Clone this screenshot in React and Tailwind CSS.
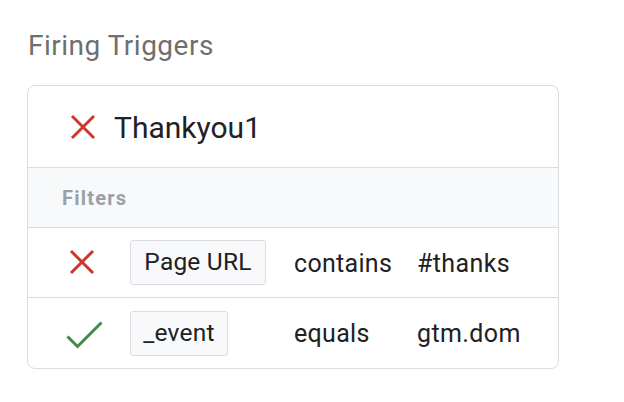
import React from 'react';

const XIcon = () => (
    <svg width="26" height="26" viewBox="0 0 26 26" fill="none">
        <path d="M2 2 L24 24 M24 2 L2 24" stroke="#c9392d" strokeWidth="3" />
    </svg>
);

const CheckIcon = () => (
    <svg width="37" height="28" viewBox="0 0 37 28" fill="none">
        <path d="M1.5 15.5 L11.5 25.5 L35.5 1.5" stroke="#3d8b47" strokeWidth="3" />
    </svg>
);

const Chip = ({ children, width }) => (
    <div className={`h-[45px] ${width} flex items-center justify-center bg-[#f8f9fa] border border-[#dadce0] rounded-[3px] text-[24.5px] tracking-[0.2px] text-[#202124]`}>
        {children}
    </div>
);

const FilterRow = ({ ok, variable, op, value, last }) => (
    <div className={`flex items-center h-[70px] ${last ? '' : 'border-b border-[#dadce0]'}`}>
        <div className="w-[102px] flex">
            {ok ? <div className="ml-[38px] mt-[4px]"><CheckIcon /></div> : <div className="ml-[41px] mt-[-1px]"><XIcon /></div>}
        </div>
        <div className="w-[164px] flex">
            <Chip width={variable === 'Page URL' ? 'w-[136px]' : 'w-[98px]'}>{variable}</Chip>
        </div>
        <div className="w-[123px] text-[25px] tracking-[0.3px] text-[#202124] mt-[2px]">{op}</div>
        <div className="text-[25px] tracking-[0.4px] text-[#202124] mt-[2px]">{value}</div>
    </div>
);

export default function App() {
    return (
        <div className="w-[624px] h-[402px] bg-white pl-[27px] pt-[28px]" style={{ fontFamily: 'Roboto, "Liberation Sans", sans-serif' }}>
            <h2 className="pl-[1px] text-[28px] leading-[36px] tracking-[0.5px] text-[#6f6f6f]">Firing Triggers</h2>
            <div className="mt-[21px] w-[532px] border border-[#dadce0] rounded-[8px] overflow-hidden">
                <div className="h-[82px] flex items-center border-b border-[#dadce0]">
                    <div className="ml-[42px] mr-[18px] mt-[1px]"><XIcon /></div>
                    <span className="text-[30px] text-[#202124] mt-[2px]">Thankyou1</span>
                </div>
                <div className="h-[60px] flex items-center bg-[#f8f9fa] border-b border-[#dadce0] pl-[34px]">
                    <span className="text-[20px] font-bold tracking-[1.2px] text-[#9aa0a6]">Filters</span>
                </div>
                <FilterRow ok={false} variable="Page URL" op="contains" value="#thanks" />
                <FilterRow ok variable="_event" op="equals" value="gtm.dom" last />
            </div>
        </div>
    );
}
